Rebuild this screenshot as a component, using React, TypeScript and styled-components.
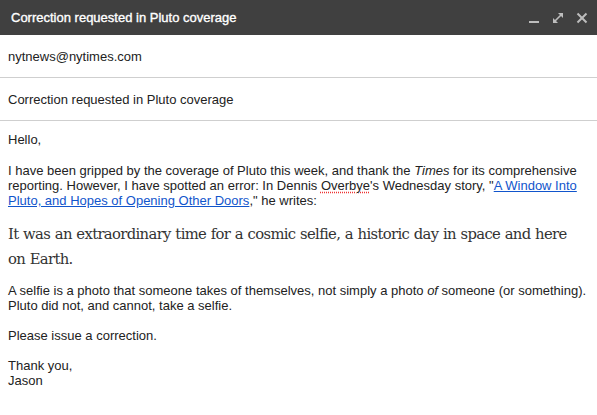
import React from "react";
import styled, { createGlobalStyle } from "styled-components";

const Global = createGlobalStyle`
  html, body { margin: 0; padding: 0; background: #fff; }
  body { font-family: "Liberation Sans", Arial, sans-serif; }
`;

const Window = styled.div`
  width: 597px;
  height: 415px;
  display: flex;
  flex-direction: column;
  background: #fff;
  overflow: hidden;
`;

const TitleBar = styled.div`
  height: 35px;
  flex: none;
  background: #404040;
  display: flex;
  align-items: center;
  justify-content: space-between;
  padding: 0 9px 0 11px;
  box-sizing: border-box;
`;

const Title = styled.div`
  color: #fff;
  font-size: 13px;
  -webkit-text-stroke: 0.35px #fff;
  margin-top: -1px;
`;

const Controls = styled.div`
  display: flex;
  align-items: center;
  gap: 12px;
`;

const IconBtn = styled.svg`
  width: 12px;
  height: 12px;
  display: block;
`;

const Field = styled.div`
  height: 42px;
  flex: none;
  border-bottom: 1px solid #cfcfcf;
  display: flex;
  align-items: center;
  padding: 0 8px;
  font-size: 13px;
  color: #222;
`;

const Body = styled.div`
  padding: 11px 8px 0 8px;
  font-size: 13px;
  line-height: 15px;
  color: #222;
`;

const Para = styled.p<{ $gap?: number }>`
  margin: 0 0 ${(p) => (p.$gap ?? 15)}px 0;
`;

const Quote = styled.p`
  margin: 0 0 12px 0;
  max-width: 570px;
  font-family: "DejaVu Serif", Georgia, serif;
  font-size: 14.8px;
  letter-spacing: -0.65px;
  word-spacing: 0.5px;
  line-height: 25px;
  color: #333;
`;

const Link = styled.a`
  color: #15c;
  text-decoration: underline;
`;

const Misspelled = styled.span`
  text-decoration: underline dotted #e33;
  text-underline-offset: 2px;
`;

export default function App() {
  return (
    <>
      <Global />
      <Window>
        <TitleBar>
          <Title>Correction requested in Pluto coverage</Title>
          <Controls>
            <IconBtn viewBox="0 0 12 12">
              <rect x="1" y="9" width="10" height="2" fill="#bdbdbd" />
            </IconBtn>
            <IconBtn viewBox="0 0 12 12">
              <line x1="2.5" y1="9.5" x2="9.5" y2="2.5" stroke="#bdbdbd" strokeWidth="1.6" />
              <polygon points="6,1 11,1 11,6" fill="#bdbdbd" />
              <polygon points="1,6 1,11 6,11" fill="#bdbdbd" />
            </IconBtn>
            <IconBtn viewBox="0 0 12 12">
              <g stroke="#bdbdbd" strokeWidth="2" fill="none">
                <line x1="1.5" y1="1.5" x2="10.5" y2="10.5" />
                <line x1="10.5" y1="1.5" x2="1.5" y2="10.5" />
              </g>
            </IconBtn>
          </Controls>
        </TitleBar>
        <Field>nytnews@nytimes.com</Field>
        <Field>Correction requested in Pluto coverage</Field>
        <Body>
          <Para $gap={16}>Hello,</Para>
          <Para $gap={13}>
            I have been gripped by the coverage of Pluto this week, and thank the <i>Times</i> for its
            comprehensive reporting. However, I have spotted an error: In Dennis <Misspelled>Overbye</Misspelled>'s
            Wednesday story, "<Link href="#">A Window Into Pluto, and Hopes of Opening Other Doors</Link>," he writes:
          </Para>
          <Quote>
            It was an extraordinary time for a cosmic selfie, a historic day in space and here on Earth.
          </Quote>
          <Para>
            A selfie is a photo that someone takes of themselves, not simply a photo <i>of</i> someone (or
            something). Pluto did not, and cannot, take a selfie.
          </Para>
          <Para>Please issue a correction.</Para>
          <Para>
            Thank you,
            <br />
            Jason
          </Para>
        </Body>
      </Window>
    </>
  );
}
